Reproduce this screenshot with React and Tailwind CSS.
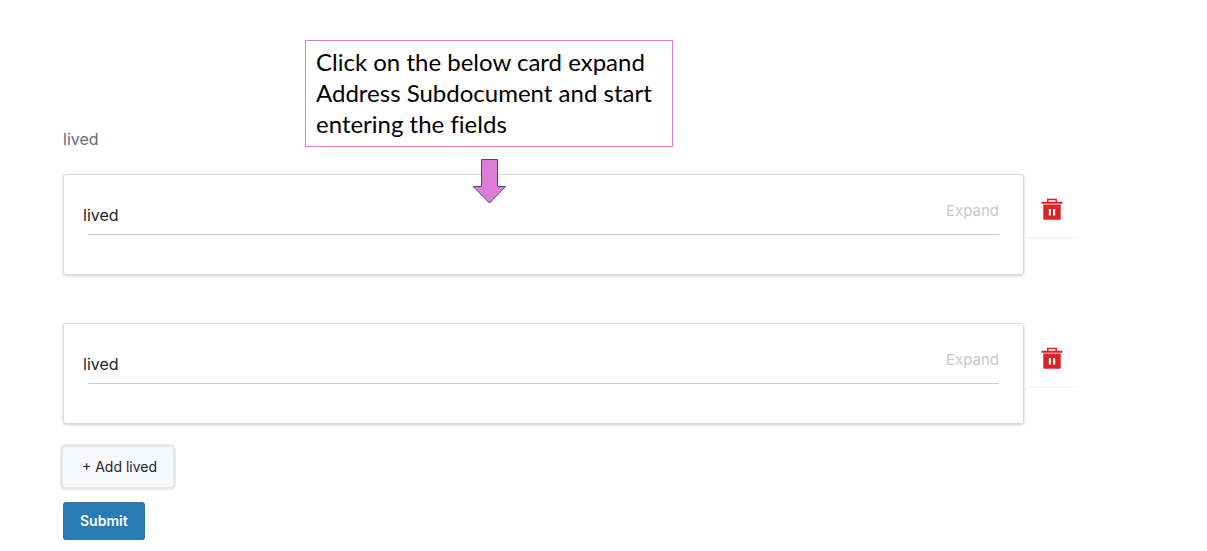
import React from "react";

function TrashIcon() {
  return (
    <svg viewBox="0 0 22 22" className="h-[22px] w-[22px]" aria-hidden="true">
      <path
        fill="#dc2127"
        fillRule="evenodd"
        d="M6 0.800h10v3h5.500v2H0.500v-2H6v-3zM7.500 2.300v1.500h7V2.300h-7zM2.300 6.500h17.400V21a0.800 0.800 0 0 1-0.800 0.800H3.100a0.800 0.800 0 0 1-0.800-0.800V6.500zM7.800 11v6.500h2.200V11H7.800zM12 11v6.500h2.200V11H12z"
      />
    </svg>
  );
}

function SubdocumentRow({ name }) {
  return (
    <div className="flex items-start">
      <section className="h-[101px] min-w-0 flex-1 rounded-[3px] border border-[#dcdcdc] bg-white pl-[19px] pr-6 shadow-[0_1px_3px_rgba(0,0,0,0.2)]">
        <div className="flex h-[59px] items-start justify-between">
          <h2 className="mt-7 text-[16px] leading-6 text-[#212529]">{name}</h2>
          <button type="button" className="mt-6 text-[15px] leading-6 text-[#c8c8c8]">
            Expand
          </button>
        </div>
        <hr className="ml-[5px] border-t border-[#cccccc]" />
      </section>
      <button
        type="button"
        aria-label={`Delete ${name}`}
        className="flex h-[65px] w-[55px] items-end justify-center rounded-[3px] border-b-2 border-[#f8f8f8] pb-[17px]"
      >
        <TrashIcon />
      </button>
    </div>
  );
}

function Callout() {
  return (
    <aside className="pointer-events-none absolute left-[305px] top-10 w-[368px]">
      <p className="border border-[#de7dd9] bg-white px-2.5 pb-[7px] pt-[5px] font-['Lato',sans-serif] text-[24px] leading-[31px] text-black [font-variant-ligatures:none]">
        Click on the below card expand Address Subdocument and start entering the fields
      </p>
      <svg viewBox="0 0 34 45" className="ml-[167px] mt-3 h-[45px] w-[34px]" aria-hidden="true">
        <path
          d="M9.500 0.500h16v27h8L17.500 44 1.200 27.500h8.300z"
          fill="#de7dd9"
          stroke="#34508c"
          strokeWidth="1"
        />
      </svg>
    </aside>
  );
}

export default function App() {
  return (
    <main className="relative bg-white pb-2.5 pl-[63px] pr-32 pt-[127px] font-['Inter',sans-serif]">
      <form onSubmit={(e) => e.preventDefault()}>
        <h1 className="text-[16px] leading-6 text-[#636b74]">lived</h1>
        <div className="mt-[23px] flex flex-col gap-12">
          <SubdocumentRow name="lived" />
          <SubdocumentRow name="lived" />
        </div>
        <div className="mt-[23px] flex flex-col items-start gap-[15px]">
          <button
            type="button"
            className="h-10 rounded-[3px] bg-[#f8f9fc] pl-[19px] pr-4 text-[14px] leading-5 text-[#212529] shadow-[0_0_0_3px_#e8e8e8]"
          >
            + Add lived
          </button>
          <button
            type="submit"
            className="h-[38px] rounded-[3px] bg-[#297ab5] px-[17px] text-[14px] font-semibold leading-5 text-white"
          >
            Submit
          </button>
        </div>
      </form>
      <Callout />
    </main>
  );
}
